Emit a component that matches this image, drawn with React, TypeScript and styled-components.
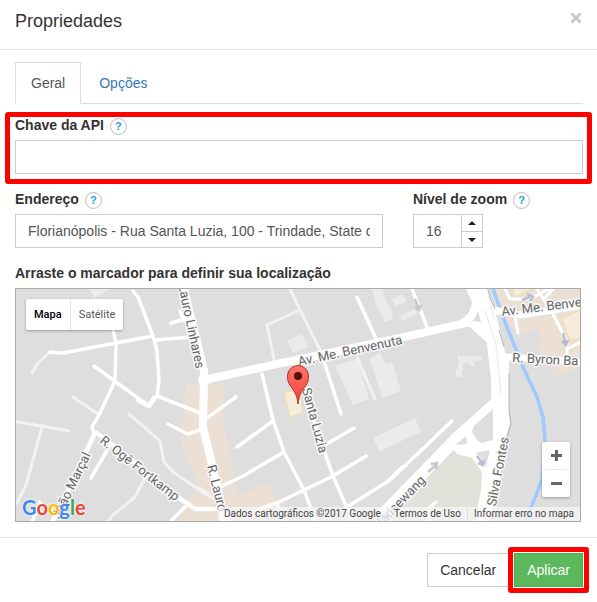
import React from "react";
import styled, { createGlobalStyle, css } from "styled-components";

const GlobalStyle = createGlobalStyle`
  *, *::before, *::after { box-sizing: border-box; }
  body {
    margin: 0;
    background: #fff;
    color: #333;
    font: 14px/20px "Liberation Sans", Arial, sans-serif;
  }
`;

const Dialog = styled.section`
  overflow: hidden;
`;

const Header = styled.header`
  display: flex;
  justify-content: space-between;
  align-items: flex-start;
  height: 50px;
  padding: 8px 15px 0;
  border-bottom: 1px solid #e5e5e5;
`;

const Title = styled.h1`
  margin: 0;
  font-size: 18px;
  font-weight: 400;
  line-height: 26px;
`;

const CloseButton = styled.button`
  display: flex;
  padding: 4px 0;
  border: 0;
  background: none;
  color: #c8c8c8;
  cursor: pointer;
`;

const Body = styled.form`
  padding: 12px 14px 15px 15px;
`;

const Tabs = styled.nav`
  display: flex;
  gap: 2px;
  border-bottom: 1px solid #ddd;
`;

const Tab = styled.button<{ $active?: boolean }>`
  height: 42px;
  margin-bottom: -1px;
  padding: 0 15px;
  border: 1px solid ${(p) => (p.$active ? "#ddd" : "transparent")};
  border-bottom-color: ${(p) => (p.$active ? "#fff" : "transparent")};
  background: ${(p) => (p.$active ? "#fff" : "none")};
  color: ${(p) => (p.$active ? "#555" : "#337ab7")};
  font: inherit;
  cursor: pointer;
`;

const outline = css`
  position: relative;
  &::after {
    content: "";
    position: absolute;
    border: 5px solid #f00;
    border-radius: 3px;
    pointer-events: none;
  }
`;

const Field = styled.div<{ $highlight?: boolean }>`
  ${(p) =>
    p.$highlight &&
    css`
      ${outline}
      &::after { inset: -4px -9px -10px -10px; }
    `}
`;

const FieldHead = styled.div`
  display: flex;
  align-items: center;
  gap: 6px;
  height: 24px;
  padding-bottom: 6px;
`;

const Label = styled.label`
  font-weight: 700;
  line-height: 20px;
`;

const HelpButton = styled.button`
  flex: none;
  width: 17px;
  height: 17px;
  margin-top: 3px;
  padding: 0;
  border: 1px solid #bbb;
  border-radius: 50%;
  background: #fff;
  color: #1ba5dc;
  font: 700 11px/15px "Liberation Sans", Arial, sans-serif;
  cursor: help;
`;

const Input = styled.input`
  display: block;
  width: 100%;
  height: 34px;
  padding: 6px 12px;
  border: 1px solid #ccc;
  border-radius: 0;
  background: #fff;
  color: #555;
  font: inherit;
  outline: 0;
`;

const Fields = styled.div`
  display: flex;
  flex-direction: column;
  gap: 16px;
  padding-top: 12px;
`;

const FieldRow = styled.div`
  display: grid;
  grid-template-columns: minmax(0, 1fr) 170px;
  gap: 30px;
`;

const Spinner = styled.div`
  display: flex;
  width: 70px;
  height: 34px;
  border: 1px solid #ccc;
`;

const SpinnerInput = styled(Input)`
  flex: 1;
  min-width: 0;
  height: 32px;
  border: 0;
`;

const SpinnerButtons = styled.div`
  display: grid;
  grid-template-rows: 1fr 1fr;
  width: 21px;
  border-left: 1px solid #ccc;
`;

const SpinnerButton = styled.button`
  display: grid;
  place-items: center;
  padding: 0;
  border: 0;
  background: #fff;
  color: #222;
  & + & { border-top: 1px solid #ccc; }
`;

const MapField = styled.div`
  padding-right: 2px;
`;

const MapTitle = styled.p`
  margin: 0 0 6px;
  font-weight: 700;
  line-height: 18px;
`;

const MapFrame = styled.div`
  position: relative;
  height: 234px;
  overflow: hidden;
  border: 1px solid #aaa;
  background: #dedede;
  font-family: Roboto, sans-serif;
`;

const MapDrawing = styled.svg`
  display: block;
  width: 100%;
  height: 100%;
`;

const MapType = styled.div`
  position: absolute;
  top: 10px;
  left: 10px;
  display: flex;
  height: 31px;
  border-radius: 2px;
  background: #fff;
  box-shadow: 0 1px 3px rgba(0, 0, 0, 0.3);
`;

const MapTypeButton = styled.button<{ $active?: boolean }>`
  padding: 0 8px;
  border: 0;
  background: none;
  color: ${(p) => (p.$active ? "#000" : "#565656")};
  font: ${(p) => (p.$active ? 500 : 400)} 11px Roboto, sans-serif;
  & + & { border-left: 1px solid #e6e6e6; }
`;

const ZoomControl = styled.div`
  position: absolute;
  right: 10px;
  bottom: 24px;
  display: flex;
  flex-direction: column;
  width: 28px;
  height: 55px;
  padding: 0 4px;
  border-radius: 2px;
  background: #fff;
  box-shadow: 0 1px 3px rgba(0, 0, 0, 0.3);
`;

const ZoomButton = styled.button`
  display: grid;
  flex: 1;
  place-items: center;
  padding: 0;
  border: 0;
  background: none;
  color: #666;
  & + & { border-top: 1px solid #e6e6e6; }
`;

const Attribution = styled.div`
  position: absolute;
  right: 0;
  bottom: 0;
  display: flex;
  height: 14px;
  background: rgba(245, 245, 245, 0.75);
  color: #444;
  font: 10px/14px Roboto, sans-serif;
`;

const AttributionItem = styled.span`
  padding: 0 6px;
  & + & { border-left: 1px solid #ddd; }
`;

const AttributionLink = styled.a`
  color: inherit;
  text-decoration: none;
`;

const GoogleLogo = styled.a`
  position: absolute;
  bottom: 0;
  left: 6px;
  font: 700 20px/28px Lato, sans-serif;
  text-decoration: none;
  text-shadow: 0 0 2px #fff, 0 0 2px #fff;
`;

const Letter = styled.span<{ $color: string }>`
  color: ${(p) => p.$color};
`;

const Footer = styled.footer`
  display: flex;
  justify-content: flex-end;
  gap: 5px;
  padding: 15px 14px 15px 15px;
  border-top: 1px solid #e5e5e5;
`;

const Button = styled.button<{ $primary?: boolean }>`
  height: 34px;
  padding: 0 12px;
  border: 1px solid ${(p) => (p.$primary ? "#4cae4c" : "#ccc")};
  background: ${(p) => (p.$primary ? "#5cb85c" : "#fff")};
  color: ${(p) => (p.$primary ? "#fff" : "#333")};
  font: inherit;
  cursor: pointer;
  ${(p) =>
    p.$primary &&
    css`
      ${outline}
      &::after { inset: -7px; }
    `}
`;

const StreetName = styled.text`
  fill: #666;
  stroke: #f8f8f8;
  stroke-width: 3px;
  stroke-linejoin: round;
  paint-order: stroke;
  font: 13px Roboto, sans-serif;
`;

const paths = ["M32 373L38 363L50 352", "M73 397L98 414", "M17 422L42 426L69 431", "M42 427L26 485L17 503",
  "M129 414L160 441L164 462L173 472L210 497", "M145 478L135 497L113 515L108 522", "M290 289L300 310L322 354",
  "M300 310L267 325L275 364", "M357 357L375 399", "M200 488L217 501"];

const streets = ["M50 352L63 353L153 336", "M113 329L116 344L115 381L99 415L92 427L94 433",
  "M133 291L138 297L153 336L157 351L159 381L157 396L149 406L94 366", "M156 340L192 337",
  "M180 311L184 321M171 323L185 319", "M157 396L200 413", "M109 447L91 478",
  "M168 424L188 434L203 429", "M187 505L170 522", "M40 502L32 522", "M357 297L377 341",
  "M322 355L341 414", "M262 374L273 420L284 452L304 490L316 522", "M294 362L325 453L333 476L347 508L353 522",
  "M237 447L273 421", "M220 487L243 476L284 452", "M220 522L277 503L304 490L333 476L366 456",
  "M325 445L354 428", "M277 503L283 522", "M347 507L387 482L402 467", "M207 418L236 397", "M200 509L222 509",
  "M412 289L427 327", "M452 421L390 480"];

const CityMap = () => (
  <MapDrawing viewBox="16 289 564 232" preserveAspectRatio="xMidYMid slice" role="img" aria-label="Mapa">
    <rect x="0" y="280" width="597" height="250" fill="#dedede" />
    <g fill="#ebe0d3">
      <path d="M187 383L225 384L223 420L238 495L269 483L277 502L273 522L177 522L194 493L196 478L183 448L179 432L184 417L183 400Z" />
      <path d="M490 289H580V367L555 378L545 355L535 347L542 339L537 329L518 334L503 317Z" />
    </g>
    <path d="M457 454L472 457L482 472L481 490L475 522H385L423 480Z" fill="#e1e2da" />
    <g fill="#ebebeb">
      <path d="M89 289H109L95 298ZM287 341L302 334L308 347L293 353ZM335 366L357 359L369 399L353 405ZM370 359L380 352L386 364L392 362L401 391L382 398ZM372 289H382L393 319L385 322L376 305Z" />
      <path d="M392 299L402 294L407 301L395 306ZM384 309L390 306L393 313L386 316ZM399 316L415 309L417 314L402 321ZM458 354L460 356H482V361H474V366H469V363H463L462 377H456V370H458ZM373 438L415 418L421 432L382 450L380 452Z" />
    </g>
    <g fill="#f5edda" stroke="#ecdcae">
      <path d="M512 288H533L515 297ZM562 319L581 309V338L570 340Z" />
      <path d="M284 392L300 390L303 413L290 417Z" />
    </g>
    <path d="M492 286L503 317L523 367L537 397L543 417L545 440L542 480L530 510L525 524" fill="none" stroke="#9fc9ff" strokeWidth="3.5" />
    <g fill="none" strokeLinecap="round" strokeLinejoin="round">
      <g stroke="#f2f2f2" strokeWidth="3">{paths.map((d) => <path key={d} d={d} />)}</g>
      <g stroke="#fff" strokeWidth="3.5">{streets.map((d) => <path key={d} d={d} />)}</g>
      <path d="M97 433L178 497L195 509H210M94 435L68 490L52 522M138 400L149 406L154 398" stroke="#fff" strokeWidth="4.5" />
      <path d="M183 285L204 371V379L203 427L215 477L225 522" stroke="#fff" strokeWidth="8" />
      <circle cx="204" cy="380" r="6" fill="#fff" />
      <path d="M204 380L277 364L400 338L470 322L488 338" stroke="#fff" strokeWidth="8" />
      <path d="M497 402L457 438L423 473L380 517" stroke="#fff" strokeWidth="12" />
      <path d="M493 310L520 315L580 306M508 357L580 362" stroke="#fff" strokeWidth="7" />
      <path d="M505 289L510 299L530 299L549 289M515 317L518 333M537 289L553 314L567 342V356M567 349L581 342M545 298L553 289M429 522V508L436 502" stroke="#fff" strokeWidth="3" />
    </g>
    <path d="M466 289H487L496 314L505 352L509 359V412L510 423L505 440L500 480L490 522H475L481 490L482 472L472 458L457 454L452 447L472 426L491 409V379L486 337L477 329L460 324V320Q471 314 472 302Z" fill="#fff" />
    <g fill="#dedede">
      <path d="M493 409V440L482 443Q477 442 472 432Q473 426 475 425Z" />
      <path d="M466 436L455 445L467 444ZM475 453L490 450L486 467Q483 458 475 453ZM478 311L473 321L481 322Z" />
    </g>
    <path d="M485 310L496 345L501 394M488 296L494 318" fill="none" stroke="#e8e8e8" />
    <path d="M488 290L491 300L495 309M504 347L499 330M509 373V410L511 424L507 438" fill="none" stroke="#b4b4b4" />
    <g fill="none" stroke="#b8bdd0" strokeWidth="2.5">
      <path d="M522 300L530 297M527 294L533 297L530 301M563 333L566 344M562 341L566 345L568 340M477 456L483 464M478 463L483 465L484 460" />
      <path d="M428 472L436 465M431 464L437 463L436 469M415 299L419 309M415 307L419 310L421 305" stroke="#c8c8c8" />
    </g>
    <StreetName textAnchor="end" transform="translate(196 369) rotate(78)">R. Lauro Linhares</StreetName>
    <StreetName transform="translate(299 366) rotate(-12)">Av. Me. Benvenuta</StreetName>
    <StreetName transform="translate(502 316) rotate(-7)">Av. Me. Benvenuta</StreetName>
    <StreetName transform="translate(512 362) rotate(3)">R. Byron Ba</StreetName>
    <StreetName transform="translate(302 389) rotate(75)">Santa Luzia</StreetName>
    <StreetName transform="translate(207 466) rotate(76)">R. Lauro</StreetName>
    <StreetName transform="translate(99 442) rotate(38)">R. Ogê Fortkamp</StreetName>
    <StreetName textAnchor="end" transform="translate(91 455) rotate(-64)">João Marçal</StreetName>
    <StreetName textAnchor="end" transform="translate(426 481) rotate(-46)">Hausewang</StreetName>
    <StreetName textAnchor="end" transform="translate(509 438) rotate(-79)">Silva Fontes</StreetName>
    <defs>
      <linearGradient id="pin" x2="0" y2="1">
        <stop stopColor="#ff776b" />
        <stop offset="1" stopColor="#f23d33" />
      </linearGradient>
    </defs>
    <path d="M298 404C297 394 294 391 290.500 386C288 382.500 287.500 379.500 287.500 376A10.500 10.500 0 0 1 308.500 376C308.500 379.500 308 382.500 305.500 386C302 391 299 394 298 404Z" fill="url(#pin)" stroke="#b5312b" />
    <circle cx="298" cy="376" r="4" fill="#590f0c" />
  </MapDrawing>
);

const logo = [["G", "#4285f4"], ["o", "#ea4335"], ["o", "#fbbc05"], ["g", "#4285f4"], ["l", "#34a853"], ["e", "#ea4335"]];

const Help = ({ topic }: { topic: string }) => (
  <HelpButton type="button" aria-label={`Ajuda: ${topic}`}>?</HelpButton>
);

export default function App() {
  return (
    <Dialog role="dialog" aria-labelledby="title">
      <GlobalStyle />
      <Header>
        <Title id="title">Propriedades</Title>
        <CloseButton type="button" aria-label="Fechar">
          <svg width="12" height="12" viewBox="0 0 12 12" stroke="currentColor" strokeWidth="3">
            <path d="M1.500 1.500L10.500 10.500M10.500 1.500L1.500 10.500" />
          </svg>
        </CloseButton>
      </Header>
      <Body id="properties" onSubmit={(e) => e.preventDefault()}>
        <Tabs role="tablist">
          <Tab type="button" role="tab" aria-selected="true" $active>Geral</Tab>
          <Tab type="button" role="tab" aria-selected="false">Opções</Tab>
        </Tabs>
        <Fields>
          <Field $highlight>
            <FieldHead>
              <Label htmlFor="key">Chave da API</Label>
              <Help topic="Chave da API" />
            </FieldHead>
            <Input id="key" />
          </Field>
          <FieldRow>
            <Field>
              <FieldHead>
                <Label htmlFor="address">Endereço</Label>
                <Help topic="Endereço" />
              </FieldHead>
              <Input id="address" defaultValue="Florianópolis - Rua Santa Luzia, 100 - Trindade, State of Santa Catarina, Brasil" />
            </Field>
            <Field>
              <FieldHead>
                <Label htmlFor="zoom">Nível de zoom</Label>
                <Help topic="Nível de zoom" />
              </FieldHead>
              <Spinner>
                <SpinnerInput id="zoom" inputMode="numeric" defaultValue="16" />
                <SpinnerButtons>
                  <SpinnerButton type="button" aria-label="Aumentar">
                    <svg width="8" height="4" viewBox="0 0 8 4"><path d="M0 4L4 0L8 4Z" fill="currentColor" /></svg>
                  </SpinnerButton>
                  <SpinnerButton type="button" aria-label="Diminuir">
                    <svg width="8" height="4" viewBox="0 0 8 4"><path d="M0 0L4 4L8 0Z" fill="currentColor" /></svg>
                  </SpinnerButton>
                </SpinnerButtons>
              </Spinner>
            </Field>
          </FieldRow>
          <MapField>
            <MapTitle>Arraste o marcador para definir sua localização</MapTitle>
            <MapFrame>
              <CityMap />
              <MapType>
                <MapTypeButton type="button" $active>Mapa</MapTypeButton>
                <MapTypeButton type="button">Satélite</MapTypeButton>
              </MapType>
              <ZoomControl>
                <ZoomButton type="button" aria-label="Aproximar">
                  <svg width="11" height="11" viewBox="0 0 11 11" stroke="currentColor" strokeWidth="3"><path d="M0 5.500H11M5.500 0V11" /></svg>
                </ZoomButton>
                <ZoomButton type="button" aria-label="Afastar">
                  <svg width="11" height="11" viewBox="0 0 11 11" stroke="currentColor" strokeWidth="3"><path d="M0 5.500H11" /></svg>
                </ZoomButton>
              </ZoomControl>
              <GoogleLogo href="#google" aria-label="Google">
                {logo.map(([char, color], i) => <Letter key={i} $color={color}>{char}</Letter>)}
              </GoogleLogo>
              <Attribution>
                <AttributionItem>Dados cartográficos ©2017 Google</AttributionItem>
                <AttributionItem><AttributionLink href="#termos">Termos de Uso</AttributionLink></AttributionItem>
                <AttributionItem><AttributionLink href="#erro">Informar erro no mapa</AttributionLink></AttributionItem>
              </Attribution>
            </MapFrame>
          </MapField>
        </Fields>
      </Body>
      <Footer>
        <Button type="button">Cancelar</Button>
        <Button type="submit" form="properties" $primary>Aplicar</Button>
      </Footer>
    </Dialog>
  );
}
